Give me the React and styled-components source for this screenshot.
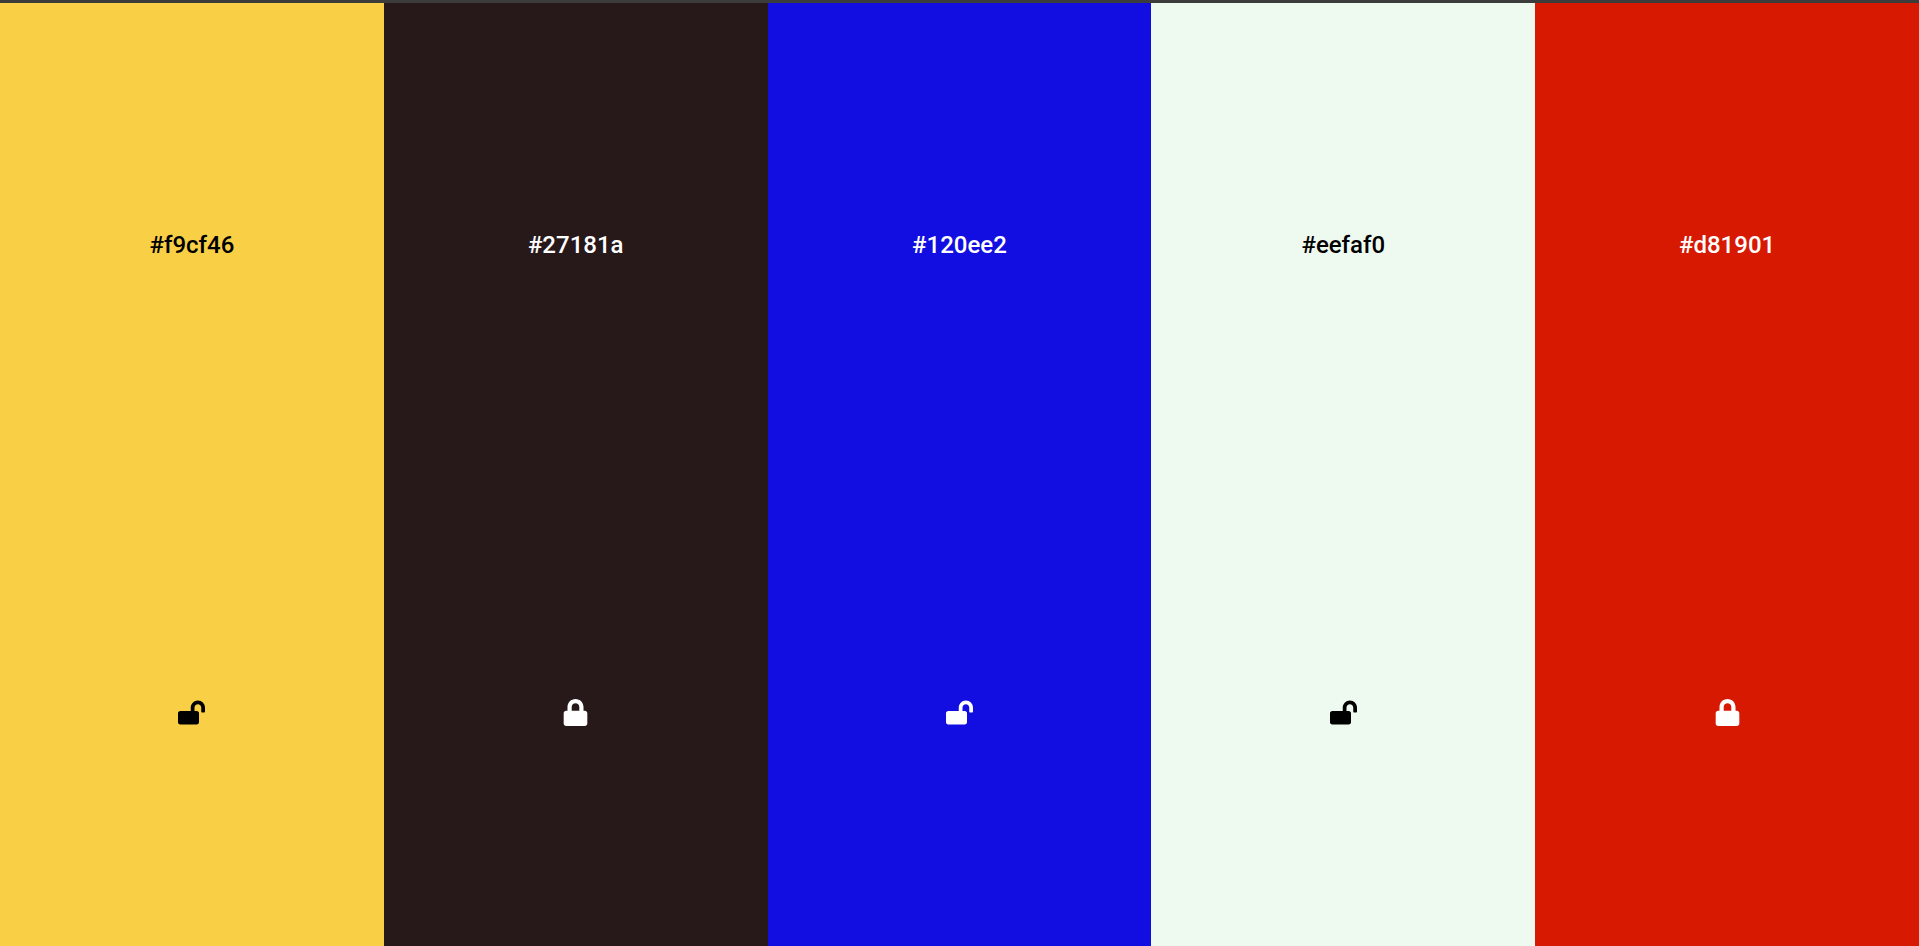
import { createGlobalStyle } from 'styled-components';
import styled from 'styled-components';
import { FaLock, FaLockOpen } from 'react-icons/fa';

const GlobalStyle = createGlobalStyle`
	html, body {
		margin: 0;
		padding: 0;
		height: 100%;
		overflow: hidden;
	}
	#root {
		height: 100%;
	}
`;

const Page = styled.div`
	display: flex;
	flex-direction: column;
	height: 100vh;
	font-family: Roboto, sans-serif;
`;

const TopBar = styled.div`
	height: 3px;
	flex-shrink: 0;
	background-color: #3c3c3c;
`;

const Palette = styled.div`
	display: grid;
	grid-template-columns: repeat(5, 1fr);
	flex: 1;
`;

const Swatch = styled.div`
	display: flex;
	flex-direction: column;
	align-items: center;
	justify-content: space-around;
	padding-top: 8px;
	background-color: ${(props) => props.$color};
	color: ${(props) => (props.$dark ? '#fff' : '#000')};
`;

const HexCode = styled.h2`
	margin: 0;
	font-size: 24px;
	font-weight: 500;
	line-height: 28px;
`;

const LockButton = styled.button`
	display: flex;
	padding: 0;
	border: none;
	background: none;
	color: inherit;
	font-size: 27px;
	cursor: pointer;
`;

const colors = [
	{ hex: '#f9cf46', dark: false, locked: false },
	{ hex: '#27181a', dark: true, locked: true },
	{ hex: '#120ee2', dark: true, locked: false },
	{ hex: '#eefaf0', dark: false, locked: false },
	{ hex: '#d81901', dark: true, locked: true },
];

export default function App() {
	return (
		<Page>
			<GlobalStyle />
			<TopBar />
			<Palette>
				{colors.map((c) => (
					<Swatch key={c.hex} $color={c.hex} $dark={c.dark}>
						<HexCode>{c.hex}</HexCode>
						<LockButton>{c.locked ? <FaLock /> : <FaLockOpen />}</LockButton>
					</Swatch>
				))}
			</Palette>
		</Page>
	);
}
